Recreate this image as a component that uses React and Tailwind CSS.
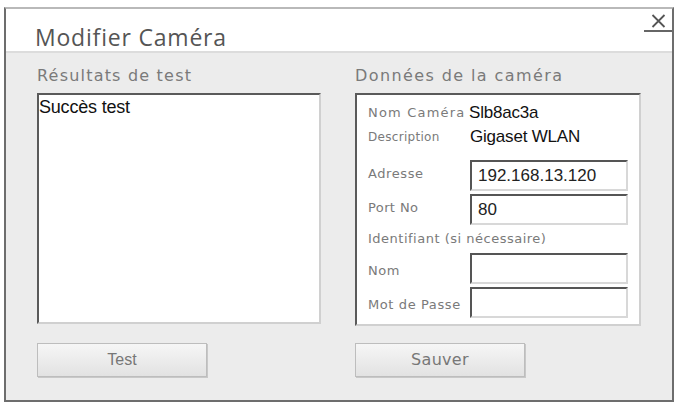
export default function App() {
  const label = "text-[#7a7a7a] [font-family:'DejaVu_Sans',sans-serif]";
  const value = "text-[17px] text-[#111] tracking-[-0.2px] [font-family:'Liberation_Sans',Arial,sans-serif]";
  const field =
    "h-[31px] w-[158px] bg-white border-2 border-t-[#555] border-l-[#555] border-r-[#d8d8d8] border-b-[#d8d8d8] flex items-center px-[6px] text-[17px] text-[#222] [font-family:'Liberation_Sans',Arial,sans-serif]";

  return (
    <div className="w-[676px] h-[403px] bg-white pt-[7px] pl-[4px]">
      <div className="w-[670px] h-[395px] border-2 border-[#6d6d6d] border-t-[#b9b9b9] flex flex-col">
        {/* Title */}
        <div className="h-[44px] bg-white border-b-2 border-[#dcdcdc] flex items-start relative">
          <div className="pl-[29px] pt-[11px] text-[23px] text-[#555] tracking-[0.8px] [font-family:'Open_Sans',sans-serif]">
            Modifier Caméra
          </div>
          <div className="absolute right-[0px] top-[5px] w-[28px] flex flex-col items-center">
            <svg width="15" height="14" viewBox="0 0 15 14" className="mb-[2px]">
              <path d="M1.5 1 L13.5 13 M13.5 1 L1.5 13" stroke="#555" strokeWidth="1.8" fill="none" />
            </svg>
            <div className="w-[28px] h-[2px] bg-[#666]" />
          </div>
        </div>

        {/* Body */}
        <div className="flex-1 bg-[#ececec] flex pl-[31px] pt-[12px]">
          {/* Left */}
          <div className="w-[284px] flex flex-col">
            <div className={`${label} text-[16px] tracking-[1.2px] leading-[22px] h-[28px]`}>Résultats de test</div>
            <div className="h-[231px] bg-white border-2 border-t-[#5a5a5a] border-l-[#5a5a5a] border-r-[#d0d0d0] border-b-[#d0d0d0] pt-[2px] text-[18px] text-[#111] leading-[20px] [font-family:'Liberation_Sans',Arial,sans-serif] tracking-[-0.2px]">
              Succès test
            </div>
            <button className="mt-[19px] w-[170px] h-[34px] border border-[#bdbdbd] bg-gradient-to-b from-[#f6f6f6] to-[#e2e2e2] text-[16px] text-[#777] [font-family:'Liberation_Sans',Arial,sans-serif] shadow-[1px_1px_0_#c8c8c8]">
              Test
            </button>
          </div>

          {/* Right */}
          <div className="ml-[34px] w-[286px] flex flex-col">
            <div className={`${label} text-[16px] tracking-[1.4px] leading-[22px] h-[28px]`}>Données de la caméra</div>
            <div className="h-[233px] bg-white border-2 border-t-[#5a5a5a] border-l-[#5a5a5a] border-r-[#d0d0d0] border-b-[#d0d0d0] pl-[11px] pt-[7px] flex flex-col">
              <div className="flex items-center h-[22px]">
                <span className={`${label} text-[13px] tracking-[1.2px] w-[101px]`}>Nom Caméra</span>
                <span className={value}>Slb8ac3a</span>
              </div>
              <div className="flex items-center h-[22px] mt-[2px]">
                <span className={`${label} text-[12px] tracking-[0.3px] w-[102px]`}>Description</span>
                <span className={value}>Gigaset WLAN</span>
              </div>
              <div className="flex items-center mt-[12px]">
                <span className={`${label} text-[13px] tracking-[0.6px] w-[102px] -mt-[4px]`}>Adresse</span>
                <div className={field}>192.168.13.120</div>
              </div>
              <div className="flex items-center mt-[3px]">
                <span className={`${label} text-[13px] tracking-[0.4px] w-[102px] -mt-[4px]`}>Port No</span>
                <div className={field}>80</div>
              </div>
              <div className={`${label} text-[13px] tracking-[0.5px] mt-[3px] h-[22px] leading-[22px]`}>
                Identifiant (si nécessaire)
              </div>
              <div className="flex items-center mt-[3px]">
                <span className={`${label} text-[13px] tracking-[0.5px] w-[102px] mt-[4px]`}>Nom</span>
                <div className={field} />
              </div>
              <div className="flex items-center mt-[3px]">
                <span className={`${label} text-[13px] w-[102px] tracking-[0.6px] mt-[4px] whitespace-nowrap`}>Mot de Passe</span>
                <div className={field} />
              </div>
            </div>
            <button className="mt-[17px] w-[170px] h-[34px] border border-[#bdbdbd] bg-gradient-to-b from-[#f6f6f6] to-[#e2e2e2] text-[16px] text-[#777] tracking-[0.3px] [font-family:'DejaVu_Sans',sans-serif] shadow-[1px_1px_0_#c8c8c8]">
              Sauver
            </button>
          </div>
        </div>
      </div>
    </div>
  );
}
